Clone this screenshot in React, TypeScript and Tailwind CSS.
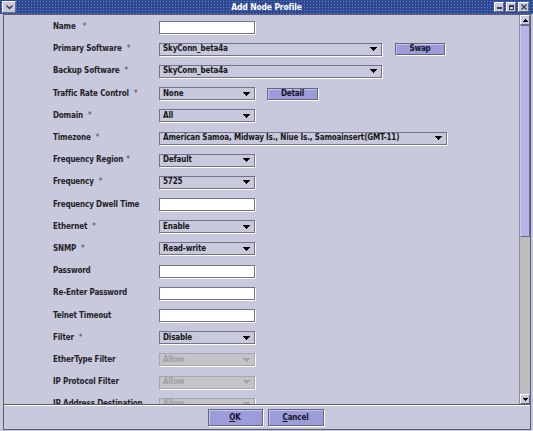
import React from "react";

const font = "font-['DejaVu_Sans_Condensed','DejaVu_Sans',sans-serif] font-bold text-[8px] tracking-[-0.15px]";

function Arrow({ disabled }: { disabled?: boolean }) {
  const c = disabled ? "#a2a2ac" : "#000000";
  return (
    <svg width="7" height="4" viewBox="0 0 7 4" className="shrink-0" shapeRendering="crispEdges">
      <rect x="0" y="0" width="7" height="1" fill={c} />
      <rect x="1" y="1" width="5" height="1" fill={c} />
      <rect x="2" y="2" width="3" height="1" fill={c} />
      <rect x="3" y="3" width="1" height="1" fill={c} />
    </svg>
  );
}

function Combo({ value, w, disabled }: { value: string; w: string; disabled?: boolean }) {
  return (
    <div
      className={`h-[13px] ${w} flex items-center justify-between pl-[3px] pr-[4px] border shadow-[1px_1px_0_#ffffff] ${
        disabled ? "border-[#a6a6b2] bg-[#c4c4c8] text-[#a0a0a4]" : "border-[#72728a] text-[#151515]"
      }`}
    >
      <span className="leading-none whitespace-nowrap">{value}</span>
      <Arrow disabled={disabled} />
    </div>
  );
}

function Field() {
  return <div className="h-[13px] w-[96px] bg-white border border-[#72728a] shadow-[1px_1px_0_#ffffff]" />;
}

function Btn({ children, cls }: { children: React.ReactNode; cls: string }) {
  return (
    <div
      className={`${cls} bg-[#9c9cda] border border-[#66667e] shadow-[1px_1px_0_#ffffff,inset_1px_1px_0_#c4c4f0] flex items-center justify-center text-[#14142a] leading-none`}
    >
      {children}
    </div>
  );
}

function Row({ label, star, starGap, children }: { label: string; star?: boolean; starGap?: string; children?: React.ReactNode }) {
  return (
    <div className="h-[22.19px] flex items-center shrink-0">
      <div className="w-[106px] shrink-0 whitespace-nowrap text-[#222226] leading-none">
        {label}
        {star && <span className={`${starGap ?? "ml-[5px]"} font-normal text-[#44444c]`}>*</span>}
      </div>
      {children}
    </div>
  );
}

export default function App() {
  return (
    <div className={`w-[533px] h-[431px] bg-[#c9c9dd] flex flex-col overflow-hidden ${font}`}>
      {/* Title bar */}
      <div className="relative h-[14px] shrink-0 bg-[#2f4992] bg-[radial-gradient(circle,#6580c6_0.7px,transparent_0.9px)] bg-[length:3px_3px] flex items-center">
        <div className="absolute left-[2px] top-[1px] w-[14px] h-[12px] bg-[#c9c9dd] border border-t-white border-l-white border-r-[#6a6a80] border-b-[#6a6a80] flex items-center justify-center">
          <svg width="7" height="5" viewBox="0 0 7 5">
            <polyline points="0.5,0.5 3.5,3.5 6.5,0.5" fill="none" stroke="#333348" strokeWidth="1.3" />
          </svg>
        </div>
        <div className="w-full text-center text-white text-[8.5px] leading-none">Add Node Profile</div>
        <div className="absolute right-[4px] top-[2px] flex gap-[2px]">
          <div className="w-[10px] h-[10px] bg-[#c9c9dd] border border-t-white border-l-white border-r-[#6a6a80] border-b-[#6a6a80] flex items-center justify-center">
            <div className="w-[5px] h-[2px] bg-[#3a3a50] mt-[2px]" />
          </div>
          <div className="w-[10px] h-[10px] bg-[#c9c9dd] border border-t-white border-l-white border-r-[#6a6a80] border-b-[#6a6a80] flex items-center justify-center">
            <div className="w-[5px] h-[5px] border border-[#3a3a50] border-t-2" />
          </div>
          <div className="w-[11px] h-[10px] bg-[#c9c9dd] border border-t-white border-l-white border-r-[#6a6a80] border-b-[#6a6a80] flex items-center justify-center">
            <svg width="6" height="6" viewBox="0 0 6 6">
              <path d="M0.5 0.5 L5.5 5.5 M5.5 0.5 L0.5 5.5" stroke="#3a3a50" strokeWidth="1.4" />
            </svg>
          </div>
        </div>
      </div>

      {/* Body */}
      <div className="flex-1 flex flex-col ml-[3px] mr-[2px] mb-[1px] border border-[#5c5c72] min-h-0">
        <div className="flex-1 flex min-h-0">
          {/* Content */}
          <div className="flex-1 overflow-hidden pl-[49px]">
            <div className="mt-[1px] flex flex-col">
              <Row label="Name" star starGap="ml-[7px]">
                <Field />
              </Row>
              <Row label="Primary Software" star>
                <Combo value="SkyConn_beta4a" w="w-[223px]" />
                <Btn cls="ml-[13px] w-[50px] h-[12px]">Swap</Btn>
              </Row>
              <Row label="Backup Software" star>
                <Combo value="SkyConn_beta4a" w="w-[223px]" />
              </Row>
              <Row label="Traffic Rate Control" star>
                <Combo value="None" w="w-[96px]" />
                <Btn cls="ml-[12px] w-[51px] h-[12px]">Detail</Btn>
              </Row>
              <Row label="Domain" star>
                <Combo value="All" w="w-[96px]" />
              </Row>
              <Row label="Timezone" star>
                <Combo value="American Samoa, Midway Is., Niue Is., Samoainsert(GMT-11)" w="w-[288px]" />
              </Row>
              <Row label="Frequency Region" star starGap="ml-[3px]">
                <Combo value="Default" w="w-[96px]" />
              </Row>
              <Row label="Frequency" star>
                <Combo value="5725" w="w-[96px]" />
              </Row>
              <Row label="Frequency Dwell Time">
                <Field />
              </Row>
              <Row label="Ethernet" star>
                <Combo value="Enable" w="w-[96px]" />
              </Row>
              <Row label="SNMP" star>
                <Combo value="Read-write" w="w-[96px]" />
              </Row>
              <Row label="Password">
                <Field />
              </Row>
              <Row label="Re-Enter Password">
                <Field />
              </Row>
              <Row label="Telnet Timeout">
                <Field />
              </Row>
              <Row label="Filter" star>
                <Combo value="Disable" w="w-[96px]" />
              </Row>
              <Row label="EtherType Filter">
                <Combo value="Allow" w="w-[96px]" disabled />
              </Row>
              <Row label="IP Protocol Filter">
                <Combo value="Allow" w="w-[96px]" disabled />
              </Row>
              <Row label="IP Address Destination">
                <Combo value="Allow" w="w-[96px]" disabled />
              </Row>
            </div>
          </div>
          {/* Scrollbar */}
          <div className="w-[11px] shrink-0 flex flex-col border-l border-[#8c8ca0] bg-[#bdbdc0]">
            <div className="h-[10px] shrink-0 bg-[#c9c9dd] border border-t-white border-l-white border-r-[#6a6a80] border-b-[#6a6a80] flex items-center justify-center">
              <svg width="5" height="3" viewBox="0 0 5 3" shapeRendering="crispEdges">
                <rect x="2" y="0" width="1" height="1" fill="#000" />
                <rect x="1" y="1" width="3" height="1" fill="#000" />
                <rect x="0" y="2" width="5" height="1" fill="#000" />
              </svg>
            </div>
            <div className="h-[212px] shrink-0 bg-[#9a9ad4] bg-[radial-gradient(circle,#d4d4ff_0.6px,transparent_0.8px)] bg-[length:2px_2px] border border-[#66669a] border-l-[#c8c8f4]" />
            <div className="flex-1" />
            <div className="h-[10px] shrink-0 bg-[#c9c9dd] border border-t-white border-l-white border-r-[#6a6a80] border-b-[#6a6a80] flex items-center justify-center">
              <svg width="5" height="3" viewBox="0 0 5 3" shapeRendering="crispEdges">
                <rect x="0" y="0" width="5" height="1" fill="#000" />
                <rect x="1" y="1" width="3" height="1" fill="#000" />
                <rect x="2" y="2" width="1" height="1" fill="#000" />
              </svg>
            </div>
          </div>
        </div>
        {/* Separator */}
        <div className="h-[1px] shrink-0 bg-[#5c5c72]" />
        <div className="h-[1px] shrink-0 bg-white" />
        {/* Button bar */}
        <div className="h-[23px] shrink-0 flex items-center justify-center gap-[5px] pr-[3px]">
          <Btn cls="w-[55px] h-[17px]">
            <span>
              <span className="underline">O</span>K
            </span>
          </Btn>
          <Btn cls="w-[56px] h-[17px]">
            <span>
              <span className="underline">C</span>ancel
            </span>
          </Btn>
        </div>
      </div>
    </div>
  );
}
